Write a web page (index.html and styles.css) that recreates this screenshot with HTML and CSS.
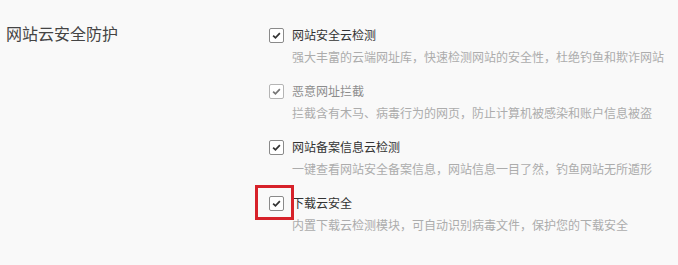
FILE: index.html
```html
<!DOCTYPE html>
<html lang="zh-CN">
  <head>
    <meta charset="UTF-8" />
    <meta name="viewport" content="width=device-width, initial-scale=1.0" />
    <title>网站云安全防护</title>
    <link rel="stylesheet" href="styles.css">
  </head>
  <body>
    <div class="settings">
      <h2 class="section-title">网站云安全防护</h2>
      <div class="options">
        <div class="option">
          <div class="option-head">
            <span class="checkbox">
              <svg viewBox="0 0 15 15"><path d="M3.6 7.6 L6.3 10.2 L11.4 4.8" /></svg>
            </span>
            <span class="option-name">网站安全云检测</span>
          </div>
          <p class="option-desc">强大丰富的云端网址库，快速检测网站的安全性，杜绝钓鱼和欺诈网站</p>
        </div>
        <div class="option disabled">
          <div class="option-head">
            <span class="checkbox">
              <svg viewBox="0 0 15 15"><path d="M3.6 7.6 L6.3 10.2 L11.4 4.8" /></svg>
            </span>
            <span class="option-name">恶意网址拦截</span>
          </div>
          <p class="option-desc">拦截含有木马、病毒行为的网页，防止计算机被感染和账户信息被盗</p>
        </div>
        <div class="option">
          <div class="option-head">
            <span class="checkbox">
              <svg viewBox="0 0 15 15"><path d="M3.6 7.6 L6.3 10.2 L11.4 4.8" /></svg>
            </span>
            <span class="option-name">网站备案信息云检测</span>
          </div>
          <p class="option-desc">一键查看网站安全备案信息，网站信息一目了然，钓鱼网站无所遁形</p>
        </div>
        <div class="option">
          <div class="option-head">
            <span class="checkbox highlighted">
              <svg viewBox="0 0 15 15"><path d="M3.6 7.6 L6.3 10.2 L11.4 4.8" /></svg>
            </span>
            <span class="option-name">下载云安全</span>
          </div>
          <p class="option-desc">内置下载云检测模块，可自动识别病毒文件，保护您的下载安全</p>
        </div>
      </div>
    </div>
  </body>
</html>
```

FILE: styles.css
```css
/* Reset */
*,
*::after {
  margin: 0;
  padding: 0;
  box-sizing: border-box;
}
body {
  font-family: "Noto Sans CJK SC", "Liberation Sans", sans-serif;
  background: #f9f9f9;
  min-height: 100vh;
}
.settings {
  display: grid;
  grid-template-columns: 263px 1fr;
  padding: 24px 0 0 6px;
}
.section-title {
  font-size: 16px;
  font-weight: normal;
  line-height: 18px;
  color: #444;
}
.options {
  display: flex;
  flex-direction: column;
  gap: 16px;
  padding-top: 2px;
}
.option-head {
  display: flex;
  align-items: center;
  gap: 8px;
  height: 18px;
}
.checkbox {
  position: relative;
  width: 15px;
  height: 15px;
  border: 1px solid #8a8a8a;
  border-radius: 2px;
  background: #fff;
  display: flex;
}
.checkbox svg {
  width: 100%;
  height: 100%;
  fill: none;
  stroke: #333;
  stroke-width: 2;
}
.option-name {
  font-size: 12px;
  line-height: 18px;
  color: #333;
}
.option-desc {
  margin-top: 4px;
  padding-left: 23px;
  font-size: 12px;
  line-height: 18px;
  color: #acacac;
}
.disabled .checkbox {
  border-color: #b5b5b5;
}
.disabled .checkbox svg {
  stroke: #777;
}
.disabled .option-name {
  color: #8c8c8c;
}
/* Red highlight frame */
.highlighted::after {
  content: "";
  position: absolute;
  left: -15px;
  top: -12px;
  width: 39px;
  height: 35px;
  border: 3px solid #d7222a;
}
```
